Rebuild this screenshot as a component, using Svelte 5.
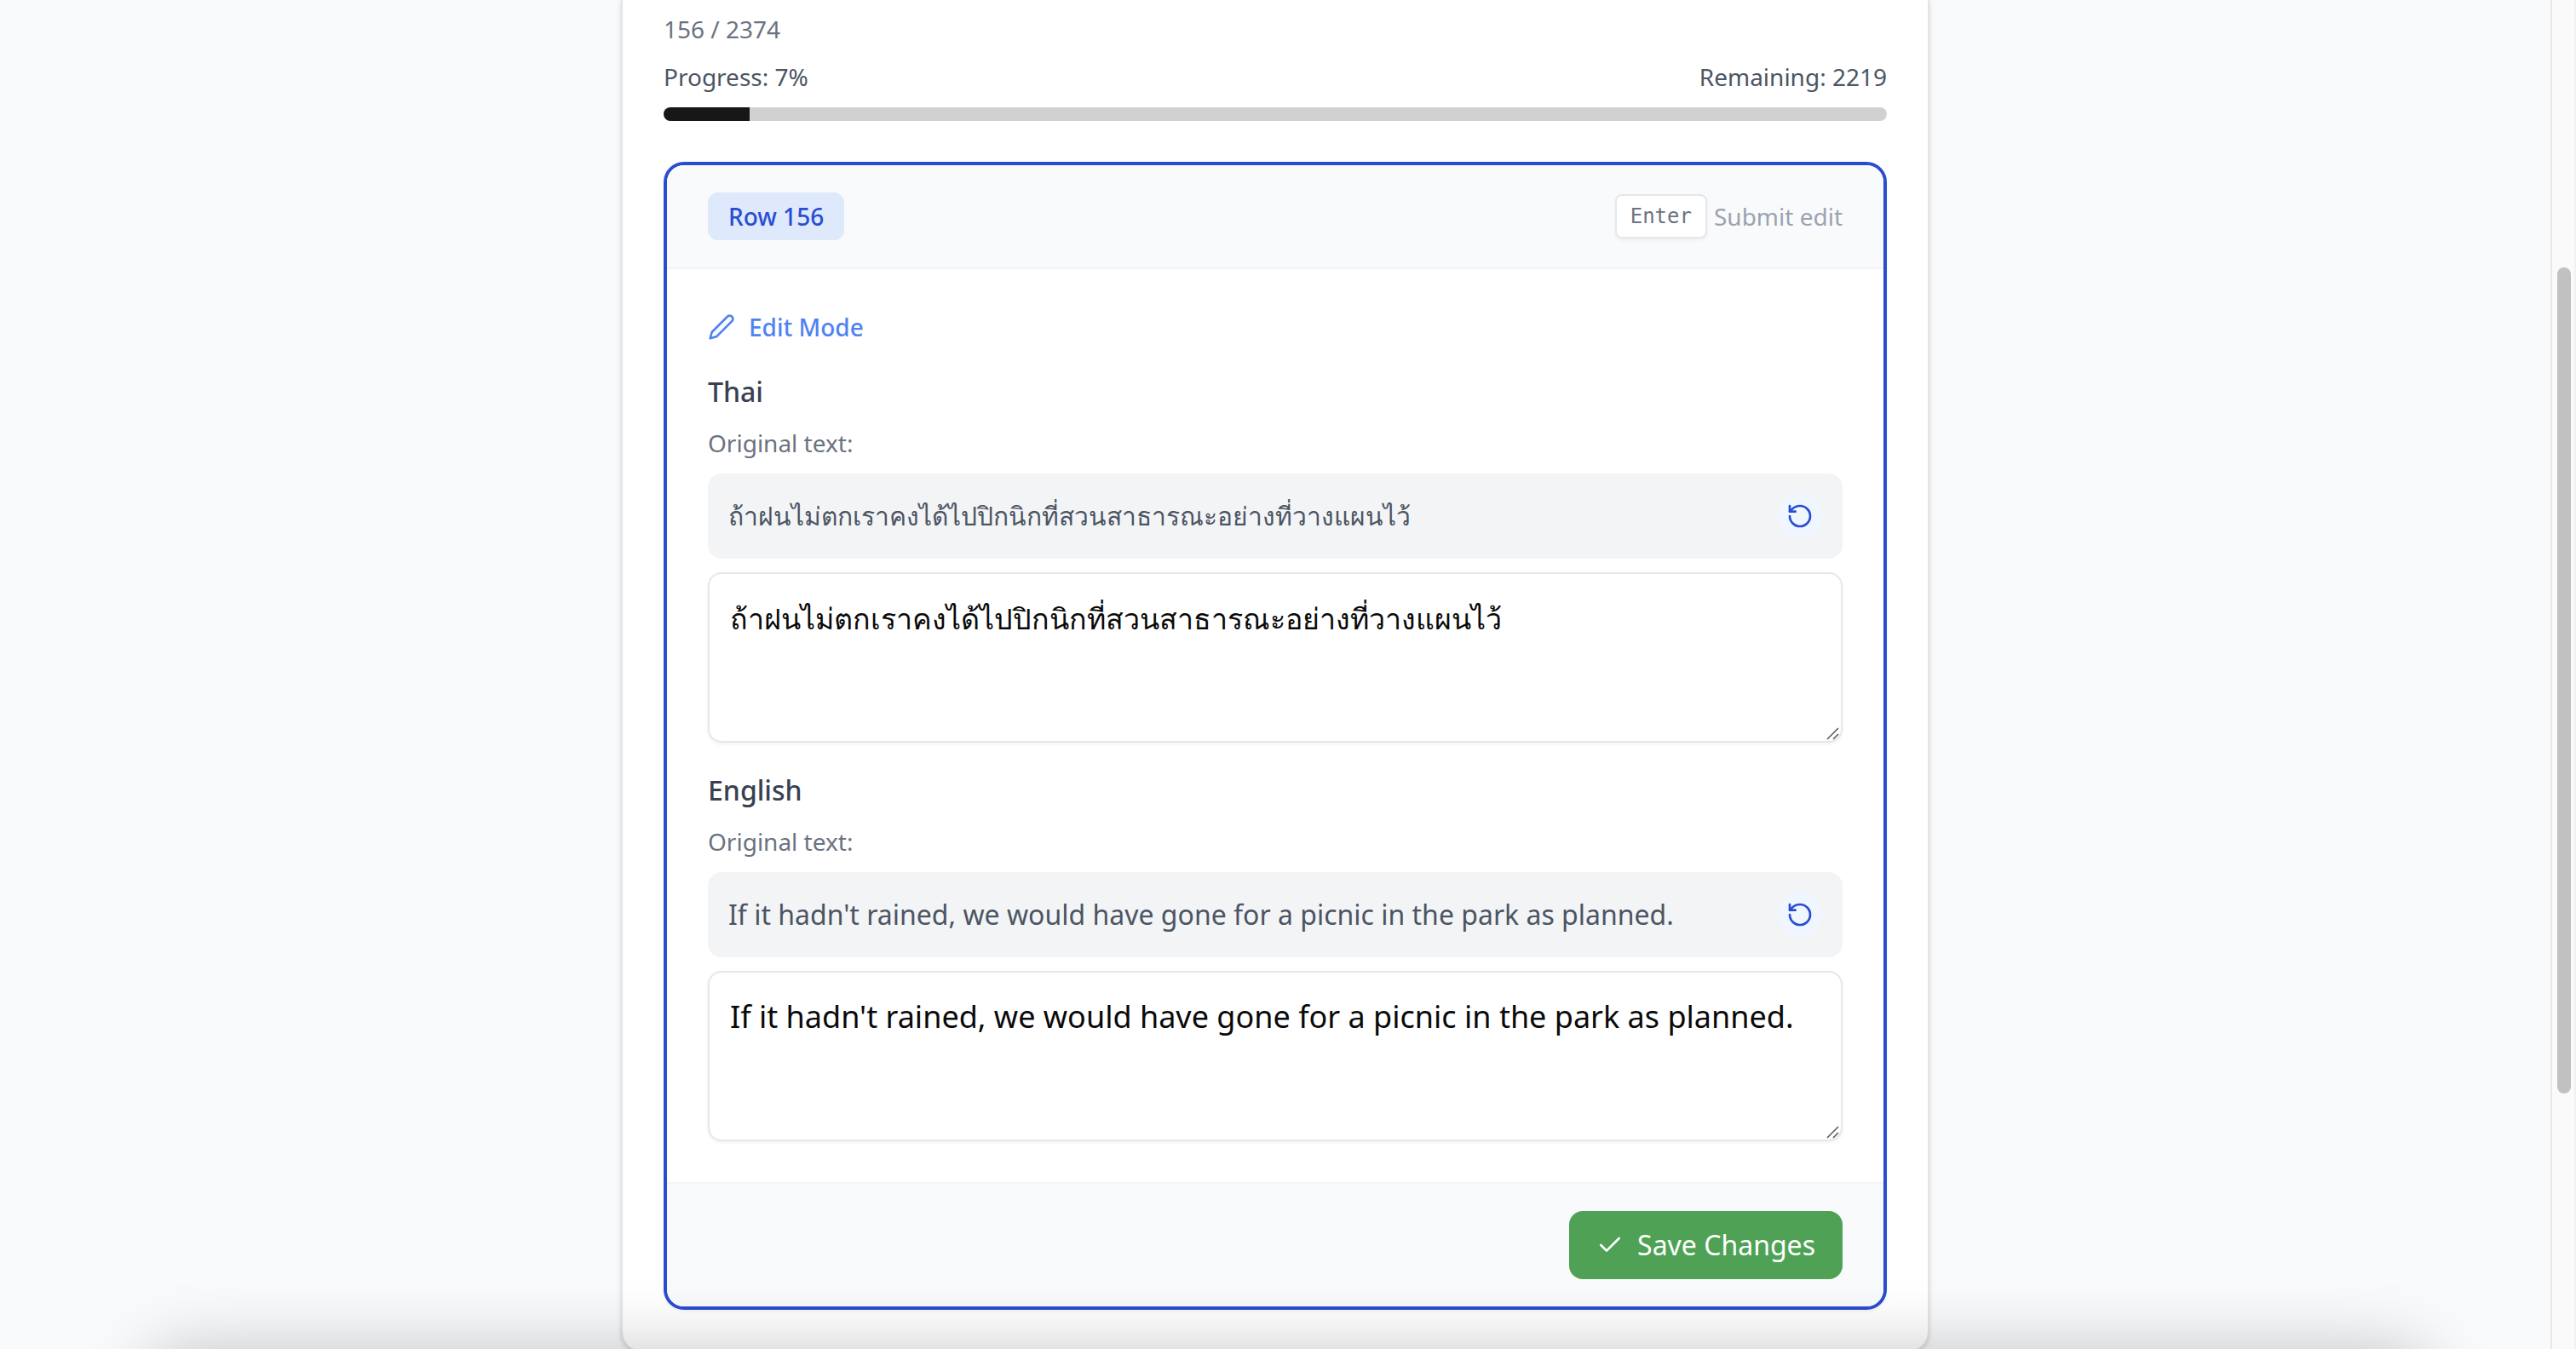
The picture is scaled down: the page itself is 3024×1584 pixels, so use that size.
<script>
  const current = 156;
  const total = 2374;
  const percent = 7;
  const remaining = 2219;

  const originals = [
    { id: 'thai', name: 'Thai', lang: 'th', text: 'ถ้าฝนไม่ตกเราคงได้ไปปิกนิกที่สวนสาธารณะอย่างที่วางแผนไว้' },
    {
      id: 'english',
      name: 'English',
      lang: 'en',
      text: "If it hadn't rained, we would have gone for a picnic in the park as planned."
    }
  ];

  let drafts = $state(originals.map((o) => o.text));
</script>

<div class="window">
  <main>
    <div class="sheet">
      <p class="count">{current} / {total}</p>
      <div class="stats">
        <span>Progress: {percent}%</span>
        <span>Remaining: {remaining}</span>
      </div>
      <div class="meter" role="progressbar" aria-label="Progress" aria-valuenow={percent} aria-valuemin="0" aria-valuemax="100">
        <div class="fill" style="width: {percent}%"></div>
      </div>

      <form class="editor" onsubmit={(e) => e.preventDefault()}>
        <header>
          <span class="chip">Row {current}</span>
          <span class="hint"><kbd>Enter</kbd>Submit edit</span>
        </header>

        <div class="body">
          <div class="mode">
            <svg class="icon" viewBox="0 0 24 24" aria-hidden="true">
              <path d="M17 3a2.85 2.83 0 1 1 4 4L7.5 20.5 2 22l1.5-5.5Z" />
            </svg>
            Edit Mode
          </div>

          {#each originals as row, i (row.id)}
            <section>
              <label for={row.id}>{row.name}</label>
              <p class="caption">Original text:</p>
              <div class="original">
                <span class="source" class:thai={row.lang === 'th'} lang={row.lang}>{row.text}</span>
                <button type="button" class="reset" aria-label="Reset {row.name}" onclick={() => (drafts[i] = row.text)}>
                  <svg class="icon" viewBox="0 0 24 24" aria-hidden="true">
                    <path d="M3 12a9 9 0 1 0 9-9 9.75 9.75 0 0 0-6.74 2.74L3 8" />
                    <path d="M3 3v5h5" />
                  </svg>
                </button>
              </div>
              <div class="field">
                <textarea id={row.id} class:thai={row.lang === 'th'} lang={row.lang} spellcheck="false" bind:value={drafts[i]}></textarea>
                <svg class="grip" viewBox="0 0 16 16" aria-hidden="true">
                  <path d="M2 15 15 2M9 15l6-6" />
                </svg>
              </div>
            </section>
          {/each}
        </div>

        <footer>
          <button type="submit" class="save">
            <svg class="icon" viewBox="0 0 24 24" aria-hidden="true"><path d="M20 6 9 17l-5-5" /></svg>
            Save Changes
          </button>
        </footer>
      </form>
    </div>
  </main>
  <div class="track"><div class="thumb"></div></div>
  <div class="shade"></div>
</div>

<style>
  :global(body) {
    background: #f9fafc;
    overflow: hidden;
  }

  .window {
    display: flex;
    height: 100vh;
    overflow: hidden;
    font-family: 'Noto Sans', 'Liberation Sans', sans-serif;
    font-size: 28px;
    line-height: 40px;
    color: #4b5563;
  }

  .window * {
    box-sizing: border-box;
  }

  main {
    flex: 1;
    min-width: 0;
  }

  .sheet {
    max-width: 1536px;
    margin: 0 auto;
    padding: 14px 48px 48px;
    border: solid #e5e5e5;
    border-width: 0 2px 2px;
    border-radius: 0 0 24px 24px;
    background: #fff;
    box-shadow: 0 2px 6px rgba(0, 0, 0, 0.1), 0 2px 4px rgba(0, 0, 0, 0.06);
  }

  p {
    margin: 0;
  }

  .count,
  .caption {
    color: #6b7280;
  }

  .stats {
    display: flex;
    justify-content: space-between;
    margin: 16px 0;
  }

  .meter {
    height: 16px;
    margin-bottom: 48px;
    border-radius: 8px;
    background: #d1d1d1;
    overflow: hidden;
  }

  .fill {
    height: 100%;
    background: #171717;
  }

  .editor {
    border: 4px solid #294dd1;
    border-radius: 24px;
    background: #fff;
    box-shadow: 0 2px 4px rgba(0, 0, 0, 0.05);
    overflow: hidden;
  }

  header {
    display: flex;
    align-items: center;
    justify-content: space-between;
    padding: 32px 48px;
    border-bottom: 2px solid #f3f4f6;
    background: #f9fafc;
  }

  .chip {
    padding: 8px 24px;
    border-radius: 12px;
    background: #dee9fb;
    color: #294dd1;
    font-weight: 500;
  }

  .hint {
    display: flex;
    align-items: center;
    gap: 8px;
    color: #9ca3af;
  }

  kbd {
    padding: 8px 16px;
    border: 2px solid #e5e7eb;
    border-radius: 8px;
    background: #fff;
    box-shadow: 0 2px 4px rgba(0, 0, 0, 0.05);
    color: #6b7280;
    font-family: 'DejaVu Sans Mono', monospace;
    font-size: 24px;
    line-height: 32px;
  }

  .body {
    display: flex;
    flex-direction: column;
    gap: 32px;
    padding: 48px;
  }

  .icon {
    width: 32px;
    height: 32px;
    fill: none;
    stroke: currentColor;
    stroke-width: 2;
    stroke-linecap: round;
    stroke-linejoin: round;
  }

  .mode {
    display: flex;
    align-items: center;
    gap: 16px;
    color: #4f83f1;
    font-weight: 500;
  }

  section {
    display: flex;
    flex-direction: column;
    gap: 16px;
  }

  label {
    color: #374151;
    font-size: 32px;
    font-weight: 500;
    line-height: 48px;
  }

  .original {
    display: flex;
    align-items: center;
    justify-content: space-between;
    padding: 24px;
    border-radius: 16px;
    background: #f3f4f6;
    line-height: 48px;
  }

  .source {
    font-size: 32px;
  }

  .source.thai {
    font-size: 30px;
  }

  button {
    display: flex;
    align-items: center;
    border: 0;
    font: inherit;
    cursor: pointer;
  }

  .reset {
    justify-content: center;
    padding: 10px;
    border-radius: 50%;
    background: #eff6ff;
    color: #294dd1;
  }

  .field {
    position: relative;
    display: flex;
  }

  textarea {
    flex: 1;
    height: 200px;
    padding: 24px;
    border: 2px solid #e5e7eb;
    border-radius: 16px;
    outline: 0;
    background: #fff;
    box-shadow: 0 2px 4px rgba(0, 0, 0, 0.05);
    color: #0a0a0a;
    font-family: inherit;
    font-size: 36px;
    line-height: 56px;
    resize: none;
  }

  textarea.thai {
    font-size: 34px;
  }

  .grip {
    position: absolute;
    right: 4px;
    bottom: 3px;
    width: 16px;
    height: 16px;
    fill: none;
    stroke: #555;
    stroke-width: 1.5;
  }

  footer {
    display: flex;
    justify-content: flex-end;
    padding: 32px 48px;
    border-top: 2px solid #f3f4f6;
    background: #f9fafc;
  }

  .save {
    gap: 16px;
    padding: 16px 32px;
    border-radius: 16px;
    background: #4fa255;
    color: #fff;
    font-size: 32px;
    line-height: 48px;
  }

  .track {
    width: 30px;
    padding: 314px 4px 0 6px;
    border: solid #e8e8e8;
    border-width: 0 2px;
    border-right-color: #f1f1f1;
    background: #fafafa;
  }

  .thumb {
    width: 16px;
    height: 970px;
    border-radius: 8px;
    background: #c1c1c1;
  }

  .shade {
    position: fixed;
    top: 100%;
    left: 180px;
    right: 180px;
    height: 120px;
    border-radius: 40px;
    box-shadow: 0 12px 80px 12px rgba(0, 0, 0, 0.22);
    pointer-events: none;
  }
</style>
